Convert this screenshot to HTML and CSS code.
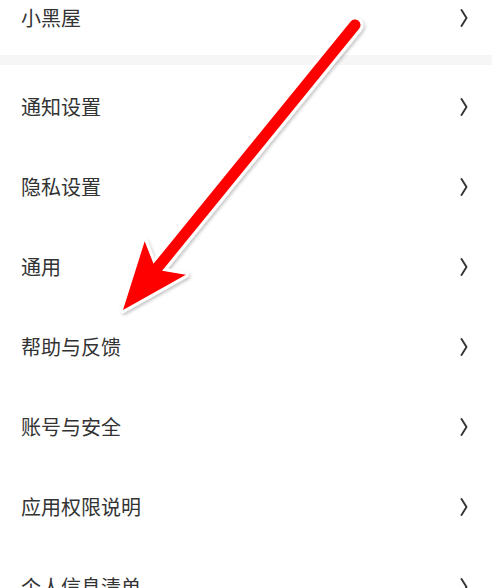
FILE: index.html
```html
<!DOCTYPE html>
<html lang="zh-CN">
<head>
<meta charset="utf-8">
<title>设置</title>
<link rel="stylesheet" href="styles.css">
</head>
<body>
<div class="page">
  <div class="group group-top">
    <div class="row"><span class="label">小黑屋</span><svg class="chev" viewBox="0 0 8 18" width="8" height="18"><polyline points="1.5,1 6.5,9 1.5,17"/></svg></div>
  </div>
  <div class="divider"></div>
  <div class="group">
    <div class="row"><span class="label">通知设置</span><svg class="chev" viewBox="0 0 8 18" width="8" height="18"><polyline points="1.5,1 6.5,9 1.5,17"/></svg></div>
    <div class="row"><span class="label">隐私设置</span><svg class="chev" viewBox="0 0 8 18" width="8" height="18"><polyline points="1.5,1 6.5,9 1.5,17"/></svg></div>
    <div class="row"><span class="label">通用</span><svg class="chev" viewBox="0 0 8 18" width="8" height="18"><polyline points="1.5,1 6.5,9 1.5,17"/></svg></div>
    <div class="row"><span class="label">帮助与反馈</span><svg class="chev" viewBox="0 0 8 18" width="8" height="18"><polyline points="1.5,1 6.5,9 1.5,17"/></svg></div>
    <div class="row"><span class="label">账号与安全</span><svg class="chev" viewBox="0 0 8 18" width="8" height="18"><polyline points="1.5,1 6.5,9 1.5,17"/></svg></div>
    <div class="row"><span class="label">应用权限说明</span><svg class="chev" viewBox="0 0 8 18" width="8" height="18"><polyline points="1.5,1 6.5,9 1.5,17"/></svg></div>
    <div class="row"><span class="label">个人信息清单</span><svg class="chev" viewBox="0 0 8 18" width="8" height="18"><polyline points="1.5,1 6.5,9 1.5,17"/></svg></div>
  </div>
  <svg class="arrow" viewBox="0 0 492 588" width="492" height="588">
    <defs>
      <filter id="sh" x="-20%" y="-20%" width="140%" height="140%">
        <feDropShadow dx="1.5" dy="2" stdDeviation="1.6" flood-color="#000" flood-opacity="0.22"/>
      </filter>
    </defs>
    <path class="arrow-outline" filter="url(#sh)" d="M123,310 L144.7,241.3 L153.5,263.8 L350.7,21.5 A5.5,5.5 0 0 1 359.3,28.5 L162.1,270.8 L185.9,274.7 Z"/>
    <path class="arrow-fill" d="M123,310 L144.7,241.3 L153.5,263.8 L350.7,21.5 A5.5,5.5 0 0 1 359.3,28.5 L162.1,270.8 L185.9,274.7 Z"/>
  </svg>
</div>
</body>
</html>
```

FILE: styles.css
```css
html, body {
  margin: 0;
  padding: 0;
  width: 492px;
  height: 588px;
  overflow: hidden;
  background: #ffffff;
}

.page {
  position: relative;
  width: 492px;
  height: 588px;
  overflow: hidden;
  font-family: "Noto Sans CJK SC", "Noto Sans", sans-serif;
  color: #333333;
}

.group {
  display: flex;
  flex-direction: column;
}

.group-top {
  margin-top: -23px;
}

.group-top .row {
  height: 78px;
}

.row {
  height: 80px;
  display: flex;
  align-items: center;
  justify-content: space-between;
  padding: 4px 24px 0 21px;
  box-sizing: border-box;
}

.label {
  font-size: 20px;
  line-height: 24px;
  font-weight: 400;
  letter-spacing: 0;
}

.chev {
  display: block;
}

.chev polyline {
  fill: none;
  stroke: #333333;
  stroke-width: 1.9;
  stroke-linecap: round;
  stroke-linejoin: round;
}

.divider {
  height: 10px;
  background: #f6f6f6;
}

.arrow {
  position: absolute;
  top: 0;
  left: 0;
  pointer-events: none;
}

.arrow-outline {
  fill: #ffffff;
  stroke: #ffffff;
  stroke-width: 6;
  stroke-linejoin: round;
}

.arrow-fill {
  fill: #ff0000;
}
```
